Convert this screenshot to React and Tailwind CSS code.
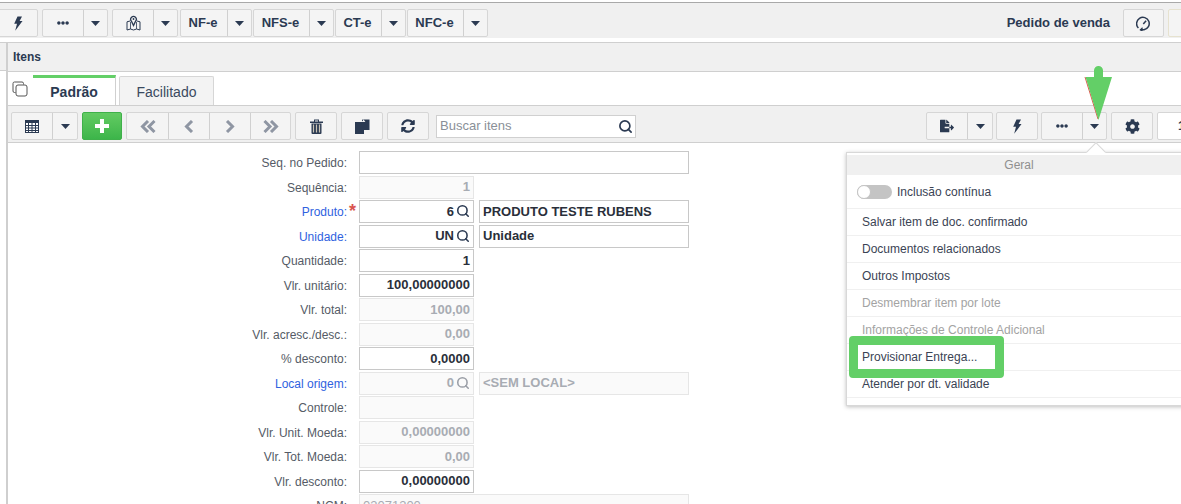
import React from "react";
import { FaEllipsisH, FaSyncAlt, FaCog, FaFileExport, FaStar } from "react-icons/fa";
import { Search } from "lucide-react";

const ink = "#2b3a52";

function Caret() {
  return <svg width="9" height="5" viewBox="0 0 9 5"><path d="M0 0h9L4.5 5z" fill="#2b3a52" /></svg>;
}

function Bolt() {
  return (
    <svg width="10" height="15" viewBox="0 0 10 15">
      <path d="M4.5 0.5H9L6.6 5H9.5L2.2 14.8 4 7.8H1.2z" fill="#2b3a52" />
    </svg>
  );
}

function MapIcon() {
  return (
    <svg width="15" height="16" viewBox="0 0 15 16" fill="none" stroke="#2b3a52">
      <path d="M4 6 1 6.8V15l3.5-1 3 1 3-1 3.5 1V6.8L11 6" strokeWidth="1" />
      <path d="M4.5 7v7M10.5 7v7" strokeWidth="0.8" />
      <path d="M7.5 10.5 5.4 6.2a2.8 2.8 0 1 1 4.2 0z" strokeWidth="1.3" />
      <circle cx="7.5" cy="4" r="0.9" fill="#2b3a52" stroke="none" />
    </svg>
  );
}

function TableIcon() {
  return (
    <svg width="14" height="13" viewBox="0 0 14 13" fill="none">
      <rect x="0.5" y="0.5" width="13" height="12" fill="#fff" stroke="#2b3a52" />
      <rect x="0.5" y="0.5" width="13" height="2.5" fill="#2b3a52" />
      <path d="M0 5.5h14M0 8h14M0 10.5h14M3.5 3v10M7 3v10M10.5 3v10" stroke="#2b3a52" />
    </svg>
  );
}

function TrashIcon() {
  return (
    <svg width="13" height="15" viewBox="0 0 13 15">
      <path d="M0 2.5h13v1.5H0zM4 0.5h5v2H8V1.5H5v1H4z" fill="#2b3a52" />
      <path d="M1.5 4.5h10V14a1 1 0 0 1-1 1h-8a1 1 0 0 1-1-1z" fill="#2b3a52" />
      <path d="M3.5 5.5v8M6.5 5.5v8M9.5 5.5v8" stroke="#c9c3b5" strokeWidth="1.2" />
    </svg>
  );
}

function PasteIcon() {
  return (
    <svg width="16" height="15" viewBox="0 0 16 15">
      <path d="M1 3h9v12H1z" fill="#2b3a52" />
      <path d="M8 0.5h7.5V11H10V3H8z" fill="#2b3a52" />
      <path d="M7.5 3 10 0.5V3z" fill="#f4f4f4" />
      <path d="M9 0.5 11 3" stroke="#f4f4f4" strokeWidth="1" />
    </svg>
  );
}

function ClockIcon() {
  return (
    <svg width="15" height="15" viewBox="0 0 15 15" fill="none" stroke="#2b3a52" strokeWidth="1.5">
      <path d="M2.4 12A6.3 6.3 0 1 1 8 13.8H4.5" />
      <path d="M7.3 8l2.8-3.2" />
      <path d="M6.6 11.8 4.4 13.8 6.6 15" strokeWidth="1.2" />
    </svg>
  );
}

function CopyOutline() {
  return (
    <svg width="16" height="16" viewBox="0 0 16 16" fill="none" stroke="#555" strokeWidth="1">
      <path d="M3.5 11.5H2.5a1.5 1.5 0 0 1-1.5-1.5V2.5A1.5 1.5 0 0 1 2.5 1H10a1.5 1.5 0 0 1 1.5 1.5v1" />
      <rect x="4" y="4" width="11" height="11" rx="2" />
    </svg>
  );
}

function Chevrons({ dir, double }) {
  const flip = dir === "right" ? "scale(-1 1) translate(-16 0)" : undefined;
  return (
    <svg width="16" height="13" viewBox="0 0 16 13" fill="none" stroke="#8f96a3" strokeWidth="3" strokeLinejoin="miter">
      <g transform={flip}>
        {double ? (
          <>
            <path d="M8 1 2.5 6.5 8 12" />
            <path d="M14.5 1 9 6.5 14.5 12" />
          </>
        ) : (
          <path d="M11 1 5.5 6.5 11 12" />
        )}
      </g>
    </svg>
  );
}

function Group({ className = "", children }) {
  return <div className={"flex h-[28px] shrink-0 rounded-[2px] border border-[#d6d6d6] bg-[#f4f4f4] " + className}>{children}</div>;
}

function Seg({ w, first, children, className = "" }) {
  return (
    <div className={"flex h-full items-center justify-center " + (first ? "" : "border-l border-[#d0d0d0] ") + w + " " + className}>
      {children}
    </div>
  );
}

function TopLabel({ children }) {
  return <span className="pr-[2px] text-[13px] font-bold text-[#2b3a52]">{children}</span>;
}

const rows = [
  { label: "Seq. no Pedido:", a: "", wide: true, kind: "on" },
  { label: "Sequência:", a: "1", kind: "off" },
  { label: "Produto:", a: "6", link: true, star: true, search: true, b: "PRODUTO TESTE RUBENS", kind: "on" },
  { label: "Unidade:", a: "UN", link: true, search: true, b: "Unidade", kind: "on" },
  { label: "Quantidade:", a: "1", kind: "on" },
  { label: "Vlr. unitário:", a: "100,00000000", kind: "on" },
  { label: "Vlr. total:", a: "100,00", kind: "off" },
  { label: "Vlr. acresc./desc.:", a: "0,00", kind: "off" },
  { label: "% desconto:", a: "0,0000", kind: "on" },
  { label: "Local origem:", a: "0", link: true, search: true, b: "<SEM LOCAL>", kind: "off" },
  { label: "Controle:", a: "", kind: "off" },
  { label: "Vlr. Unit. Moeda:", a: "0,00000000", kind: "off" },
  { label: "Vlr. Tot. Moeda:", a: "0,00", kind: "off" },
  { label: "Vlr. desconto:", a: "0,00000000", kind: "on" },
  { label: "NCM:", a: "03071300", wide: true, left: true, normal: true, kind: "off" },
];

function Field({ w, kind, children, className = "" }) {
  const on = kind === "on";
  return (
    <div className={"flex h-[23px] shrink-0 items-center border px-[3px] text-[13px] font-bold " + w + " " + (on ? "border-[#c8c8c8] bg-white text-[#2a2f3a] " : "border-[#e6e6e6] bg-[#fafafa] text-[#a8acb3] ") + className}>
      {children}
    </div>
  );
}

function Row({ r }) {
  const on = r.kind === "on";
  return (
    <div className="flex h-[24.5px] shrink-0 items-start">
      <div className="relative h-[23px] w-[339px] shrink-0 text-right text-[12px] leading-[24px]">
        <span className={r.link ? "text-[#2f62e0]" : "text-[#555b66]"}>{r.label}</span>
        {r.star && <span className="absolute left-[341px] top-[1px] text-[18px] leading-[21px] font-bold text-[#d9534f]">*</span>}
      </div>
      <Field w={r.wide ? "ml-[12px] w-[330px]" : "ml-[12px] w-[115px]"} kind={r.kind} className={r.left ? "justify-start" : "justify-end"}>
        <span className={r.normal ? "font-normal" : ""}>{r.a}</span>
        {r.search && <Search size={14} strokeWidth={2.7} className="mb-[1px] ml-[2px]" color={on ? ink : "#9a9ea6"} />}
      </Field>
      {r.b && (
        <Field w="ml-[5px] w-[210px]" kind={r.kind} className="justify-start">
          {r.b}
        </Field>
      )}
    </div>
  );
}

function MenuItem({ children, muted }) {
  return (
    <div className={"flex h-[27px] items-center border-b border-[#f0f0f0] pl-[15px] text-[12px] " + (muted ? "text-[#a3a3a3]" : "text-[#3a4354]")}>
      {children}
    </div>
  );
}

export default function App() {
  return (
    <div className="relative h-[504px] w-[1181px] overflow-hidden bg-white" style={{ fontFamily: '"Liberation Sans", Arial, sans-serif' }}>
      {/* top bar */}
      <div className="mt-[2px] flex h-[36px] items-center border-t border-[#a9a9a9] bg-[#f0f0f0] pt-[5px]">
        <Group className="-ml-[3px] w-[41px]"><Seg first w="w-full"><Bolt /></Seg></Group>
        <Group className="ml-[4px]">
          <Seg first w="w-[40px]"><FaEllipsisH size={12} color={ink} /></Seg>
          <Seg w="w-[24px]"><Caret /></Seg>
        </Group>
        <Group className="ml-[4px]">
          <Seg first w="w-[40px]"><MapIcon /></Seg>
          <Seg w="w-[24px]"><Caret /></Seg>
        </Group>
        <Group className="ml-[2px]">
          <Seg first w="w-[46px]"><TopLabel>NF-e</TopLabel></Seg>
          <Seg w="w-[24px]"><Caret /></Seg>
        </Group>
        <Group className="ml-px">
          <Seg first w="w-[55px]"><TopLabel>NFS-e</TopLabel></Seg>
          <Seg w="w-[24px]"><Caret /></Seg>
        </Group>
        <Group className="ml-px">
          <Seg first w="w-[45px]"><TopLabel>CT-e</TopLabel></Seg>
          <Seg w="w-[24px]"><Caret /></Seg>
        </Group>
        <Group className="ml-px">
          <Seg first w="w-[55px]"><TopLabel>NFC-e</TopLabel></Seg>
          <Seg w="w-[24px]"><Caret /></Seg>
        </Group>
        <div className="-mr-[28px] ml-auto flex shrink-0 items-center">
          <span className="mr-[13px] text-[13px] font-bold text-[#2b3a52]">Pedido de venda</span>
          <Group className="w-[41px]"><Seg first w="w-full"><ClockIcon /></Seg></Group>
          <Group className="ml-[4px] w-[41px] border-[#e6e2cf]"><Seg first w="w-full"><FaStar size={14} color="#f2d675" /></Seg></Group>
        </div>
      </div>

      {/* body */}
      <div className="mt-[4px] flex">
        <div className="h-[29px] w-[6px] shrink-0 border-b border-t border-[#cfcfcf] bg-[#f0f0f0]" />
        <div className="min-w-0 flex-1 border-l-2 border-[#cfcfcf]">
          <div className="flex h-[30px] items-center border-b border-t border-[#cfcfcf] bg-[#f0f0f0] pl-[5px] text-[12px] font-bold text-[#2b3a52]">Itens</div>
          {/* tabs */}
          <div className="flex h-[33px] items-end pl-[4px]">
            <div className="mb-[8px] mr-[5px]"><CopyOutline /></div>
            <div className="flex h-[30px] w-[83px] items-center justify-center border-r border-t-[3px] border-[#d0d0d0] border-t-[#63cf67] bg-white pt-[2px] text-[14px] font-bold text-[#2b3a52]">Padrão</div>
            <div className="ml-[3px] flex h-[29px] w-[95px] items-center justify-center rounded-t-[2px] border border-b-0 border-[#d6d6d6] bg-[#f3f3f3] pt-[2px] text-[14px] text-[#3a4a60]">Facilitado</div>
          </div>
          {/* toolbar */}
          <div className="flex h-[38px] items-center border-b border-t border-[#cfcfcf] bg-[#f0f0f0] pl-[3px] pt-[4px]">
            <Group>
              <Seg first w="w-[40px]"><TableIcon /></Seg>
              <Seg w="w-[25px]"><Caret /></Seg>
            </Group>
            <div className="ml-[4px] flex h-[28px] w-[40px] shrink-0 items-center justify-center rounded-[2px] border border-[#3fb04a] bg-linear-to-b from-[#62cb62] to-[#3cb54a]">
              <svg width="14" height="14" viewBox="0 0 14 14"><path d="M5 0h4v5h5v4H9v5H5V9H0V5h5z" fill="#fff" /></svg>
            </div>
            <Group className="ml-[4px]">
              <Seg first w="w-[41px]"><Chevrons double /></Seg>
              <Seg w="w-[41px]"><Chevrons /></Seg>
              <Seg w="w-[41px]"><Chevrons dir="right" /></Seg>
              <Seg w="w-[40px]"><Chevrons dir="right" double /></Seg>
            </Group>
            <Group className="ml-[4px] w-[42px]"><Seg first w="w-full"><TrashIcon /></Seg></Group>
            <Group className="ml-[4px] w-[42px]"><Seg first w="w-full"><PasteIcon /></Seg></Group>
            <Group className="ml-[4px] w-[42px]"><Seg first w="w-full"><FaSyncAlt size={14} color={ink} /></Seg></Group>
            <div className="ml-[7px] flex h-[23px] w-[200px] shrink-0 items-center justify-between border border-[#d0d0d0] bg-white pl-[3px] pr-[2px] text-[13px] text-[#8a8f98]">
              Buscar itens
              <Search size={15} strokeWidth={2.7} color={ink} />
            </div>
            <div className="-mr-[50px] ml-auto flex shrink-0 items-center">
              <Group>
                <Seg first w="w-[40px]"><FaFileExport size={14} color={ink} /></Seg>
                <Seg w="w-[25px]"><Caret /></Seg>
              </Group>
              <Group className="ml-[3px] w-[42px]"><Seg first w="w-full"><Bolt /></Seg></Group>
              <Group className="ml-[3px]">
                <Seg first w="w-[40px]"><FaEllipsisH size={12} color={ink} /></Seg>
                <Seg w="w-[24px]"><Caret /></Seg>
              </Group>
              <Group className="ml-[4px] w-[42px]"><Seg first w="w-full"><FaCog size={15} color={ink} /></Seg></Group>
              <div className="ml-[4px] flex h-[28px] w-[74px] items-center rounded-[2px] border border-[#d6d6d6] bg-white pl-[20px] text-[13px] font-bold text-[#2b3a52]">1</div>
            </div>
          </div>
          {/* form */}
          <div className="flex flex-col pt-[8px]">
            {rows.map((r) => <Row key={r.label} r={r} />)}
          </div>
        </div>
      </div>

      {/* popup menu */}
      <div className="absolute left-[846px] top-[152px] w-[346px] border border-[#d8d8d8] bg-white pb-[7px] shadow-[0_1px_4px_rgba(0,0,0,0.25)]">
        <div className="absolute -top-[8px] left-[242px] h-[14px] w-[14px] rotate-45 border-l border-t border-[#d8d8d8] bg-white" />
        <div className="relative mt-[2px] flex h-[20px] items-center justify-center bg-[#f0f0f0] text-[12px] text-[#8f8f8f]">Geral</div>
        <div className="flex h-[34px] items-center border-b border-[#f0f0f0] pl-[10px] text-[12px] text-[#3a4354]">
          <span className="relative mr-[5px] h-[14px] w-[35px] rounded-full bg-[#c4c4c4]">
            <span className="absolute left-0 top-0 h-[14px] w-[14px] rounded-full border border-[#c4c4c4] bg-white" />
          </span>
          Inclusão contínua
        </div>
        <MenuItem>Salvar item de doc. confirmado</MenuItem>
        <MenuItem>Documentos relacionados</MenuItem>
        <MenuItem>Outros Impostos</MenuItem>
        <MenuItem muted>Desmembrar item por lote</MenuItem>
        <MenuItem muted>Informações de Controle Adicional</MenuItem>
        <MenuItem>Provisionar Entrega...</MenuItem>
        <MenuItem>Atender por dt. validade</MenuItem>
      </div>

      {/* green annotations */}
      <div className="absolute left-[849px] top-[336px] h-[42px] w-[155px] rounded-[4px] border-[9px] border-[#63cf67]" />
      <svg className="absolute left-[1084px] top-[65px]" width="29" height="56" viewBox="0 0 29 56">
        <path d="M1 12 14 54" stroke="#e0584f" strokeWidth="1" fill="none" />
        <path d="M10 5.5a4.5 4.5 0 0 1 9 0V12h9L14.5 55 1.5 12h8.5z" fill="#63cf67" />
      </svg>
    </div>
  );
}
